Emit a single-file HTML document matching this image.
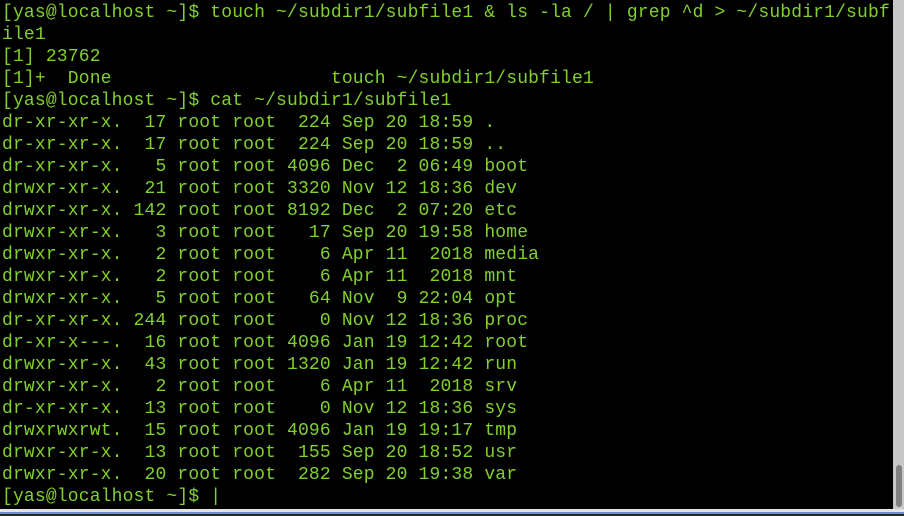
<!DOCTYPE html>
<html><head><style>
html,body{margin:0;padding:0;width:904px;height:516px;overflow:hidden;background:#000;}
pre{position:absolute;left:2px;top:2px;margin:0;font-family:"Liberation Mono",monospace;font-size:18px;letter-spacing:0.16px;line-height:22px;color:#82d02e;white-space:pre;}
#sb{position:absolute;left:893px;top:0;width:11px;height:509px;background:#c8c8c8;}
#th{position:absolute;left:896px;top:465px;width:6px;height:42px;background:#808080;border-radius:3px;}
#b1{position:absolute;left:0;top:509px;width:904px;height:3px;background:#e4e4e4;}
#b2{position:absolute;left:0;top:512px;width:904px;height:2px;background:#6a8fc0;}
#b3{position:absolute;left:0;top:514px;width:904px;height:2px;background:#2a2a2a;}
</style></head><body>
<pre>[yas@localhost ~]$ touch ~/subdir1/subfile1 &amp; ls -la / | grep ^d &gt; ~/subdir1/subf
ile1
[1] 23762
[1]+  Done                    touch ~/subdir1/subfile1
[yas@localhost ~]$ cat ~/subdir1/subfile1
dr-xr-xr-x.  17 root root  224 Sep 20 18:59 .
dr-xr-xr-x.  17 root root  224 Sep 20 18:59 ..
dr-xr-xr-x.   5 root root 4096 Dec  2 06:49 boot
drwxr-xr-x.  21 root root 3320 Nov 12 18:36 dev
drwxr-xr-x. 142 root root 8192 Dec  2 07:20 etc
drwxr-xr-x.   3 root root   17 Sep 20 19:58 home
drwxr-xr-x.   2 root root    6 Apr 11  2018 media
drwxr-xr-x.   2 root root    6 Apr 11  2018 mnt
drwxr-xr-x.   5 root root   64 Nov  9 22:04 opt
dr-xr-xr-x. 244 root root    0 Nov 12 18:36 proc
dr-xr-x---.  16 root root 4096 Jan 19 12:42 root
drwxr-xr-x.  43 root root 1320 Jan 19 12:42 run
drwxr-xr-x.   2 root root    6 Apr 11  2018 srv
dr-xr-xr-x.  13 root root    0 Nov 12 18:36 sys
drwxrwxrwt.  15 root root 4096 Jan 19 19:17 tmp
drwxr-xr-x.  13 root root  155 Sep 20 18:52 usr
drwxr-xr-x.  20 root root  282 Sep 20 19:38 var
[yas@localhost ~]$ |</pre>
<div id="sb"></div><div id="th"></div>
<div id="b1"></div><div id="b2"></div><div id="b3"></div>
</body></html>
